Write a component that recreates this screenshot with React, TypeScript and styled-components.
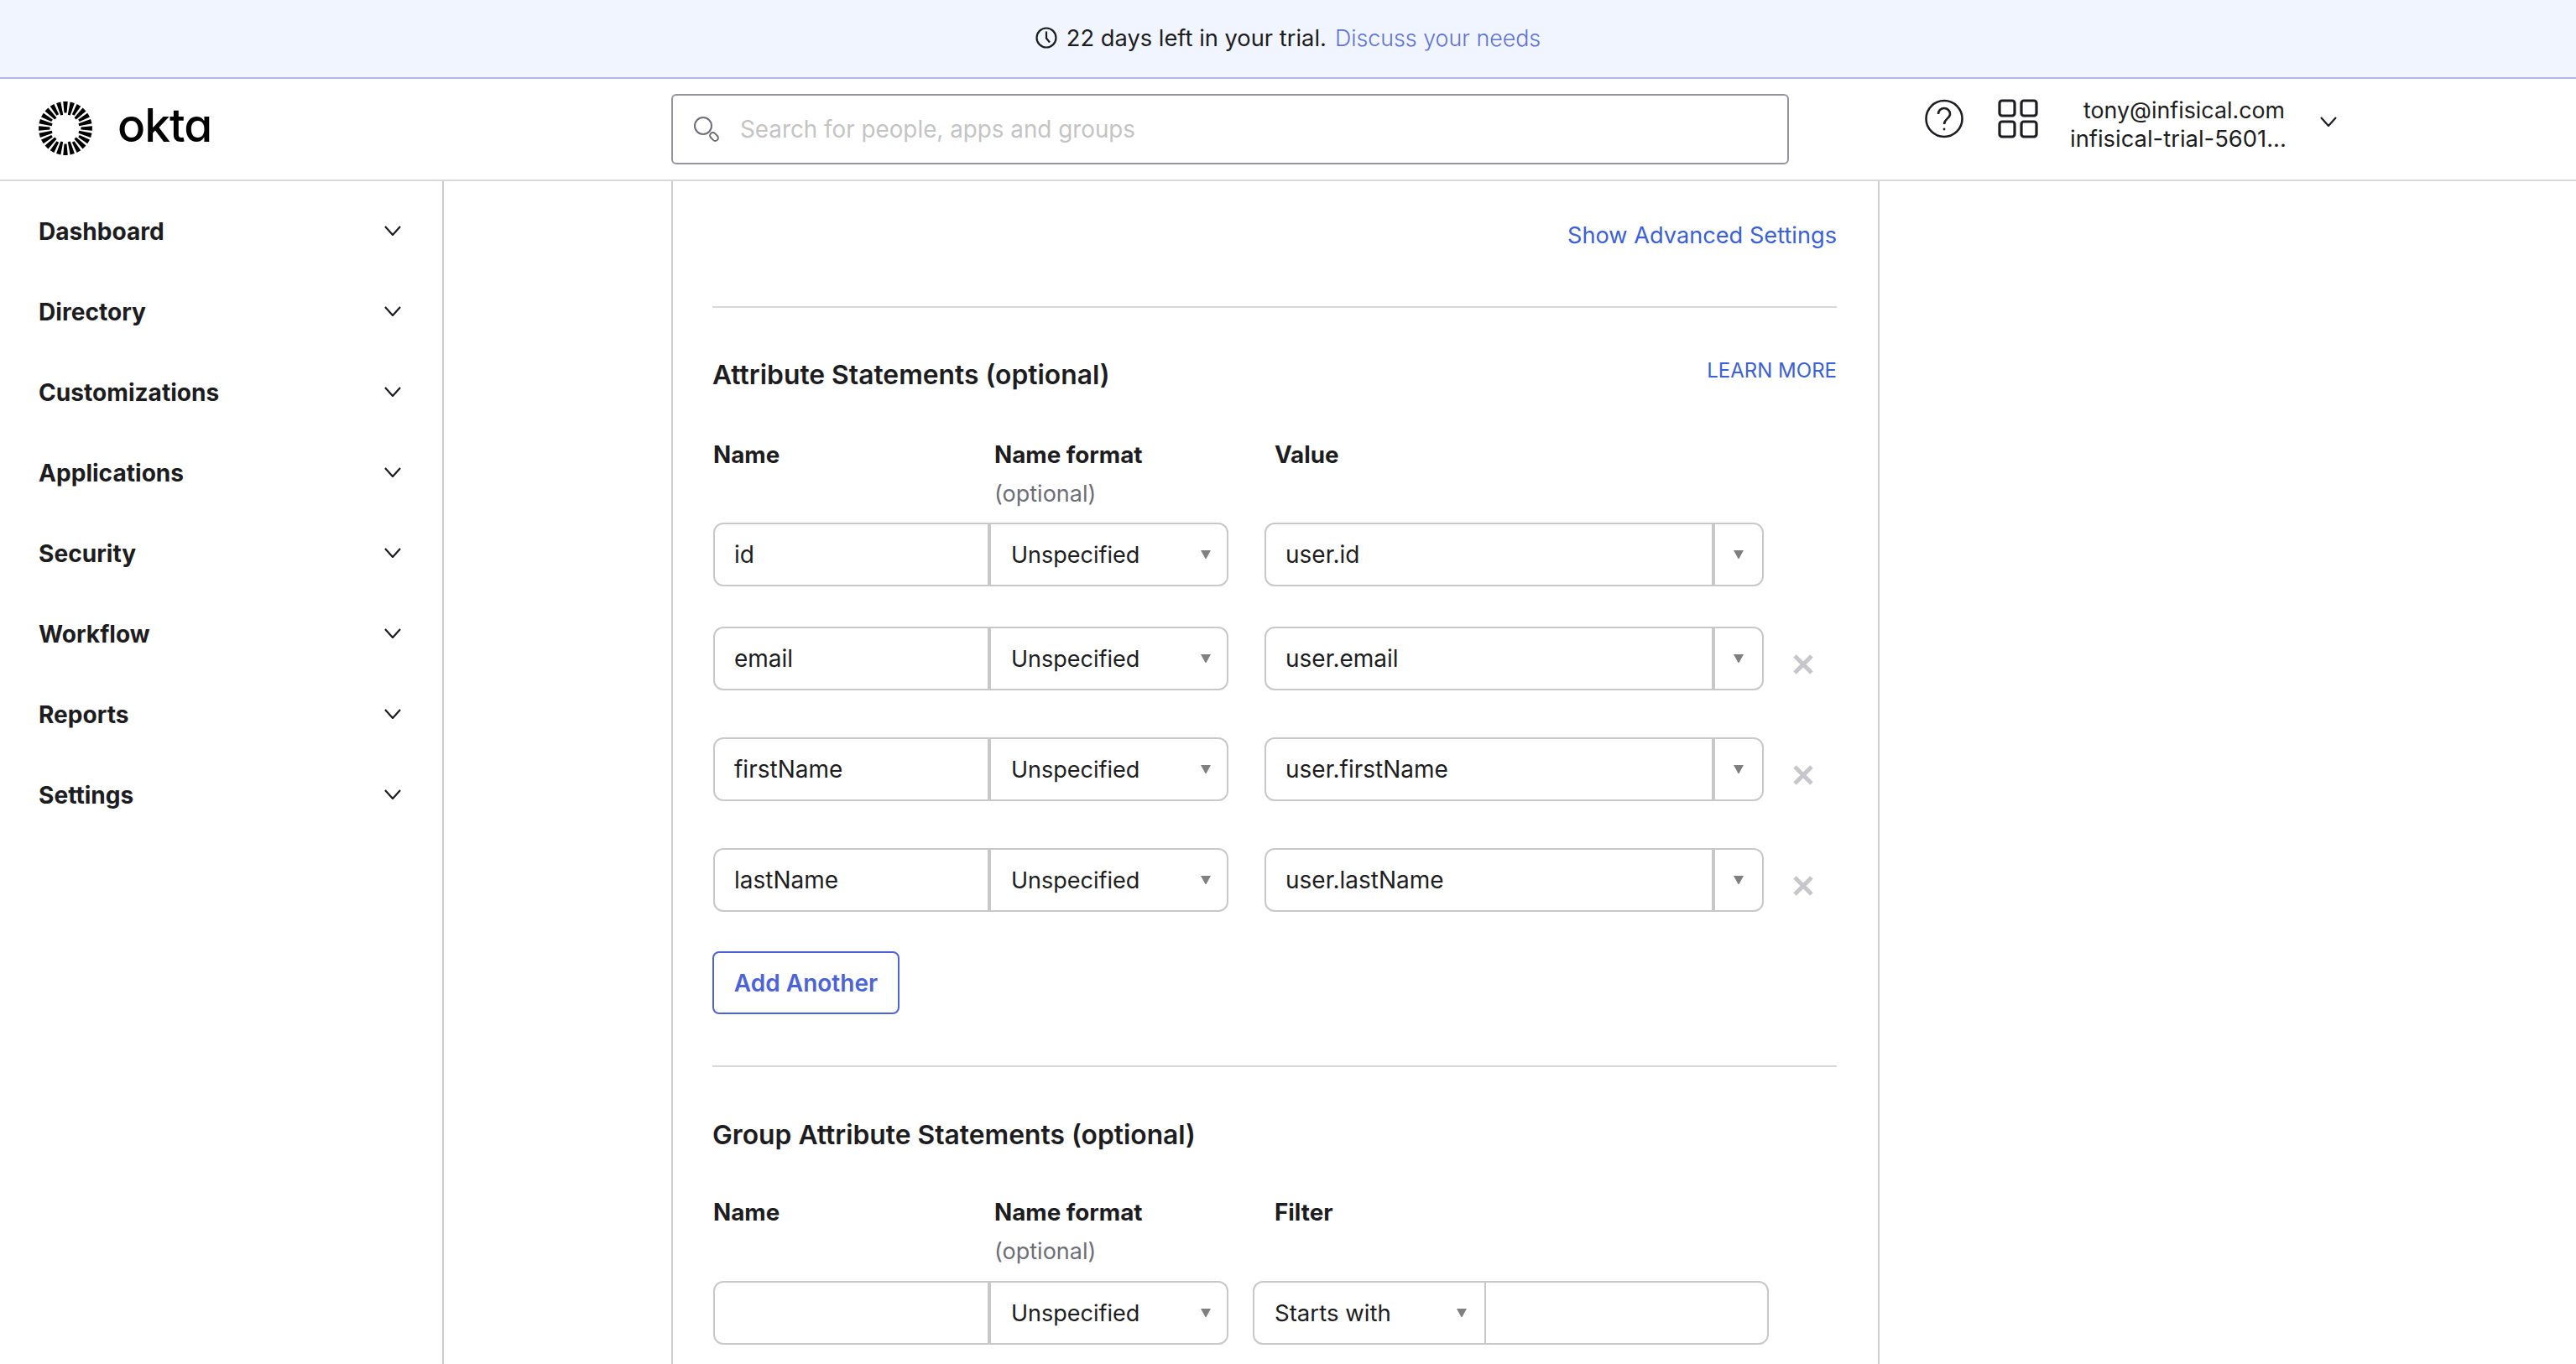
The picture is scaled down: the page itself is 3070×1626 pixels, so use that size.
import React, {FunctionComponent} from "react";
import styled, {createGlobalStyle} from "styled-components";

const NAV_ITEMS = ["Dashboard", "Directory", "Customizations", "Applications", "Security", "Workflow", "Reports", "Settings"];

const ATTRIBUTES = [
    {name: "id", value: "user.id", removable: false, gap: 0},
    {name: "email", value: "user.email", removable: true, gap: 48},
    {name: "firstName", value: "user.firstName", removable: true, gap: 56},
    {name: "lastName", value: "user.lastName", removable: true, gap: 56},
];

const RAYS = Array.from({length: 24}, (_, i) => {
    const angle = (i / 24) * Math.PI * 2;
    const inner = i % 2 === 0 ? 18.5 : 16.5;
    const point = (r: number, a: number) => `${(32 + r * Math.sin(a)).toFixed(2)},${(32 - r * Math.cos(a)).toFixed(2)}`;
    return [point(inner, angle - 1.5 / inner), point(32, angle - 0.085), point(32, angle + 0.085), point(inner, angle + 1.5 / inner)].join(" ");
});

const Chevron: FunctionComponent = () => (
    <svg width="20" height="12" viewBox="0 0 20 12" fill="none" stroke="#1d1d21" strokeWidth="2.2">
        <path d="M1 1l9 10 9-10" />
    </svg>
);

const Arrow: FunctionComponent = () => (
    <svg width="12" height="10" viewBox="0 0 12 10" fill="#808080">
        <path d="M0 0h12L6.5 10h-1z" />
    </svg>
);

const Logo: FunctionComponent = () => (
    <svg width="64" height="64" viewBox="0 0 64 64" fill="#000">
        {RAYS.map((points, i) => <polygon key={i} points={points} />)}
    </svg>
);

const AttributeRow: FunctionComponent<{name: string; value: string; removable: boolean; gap: number}> = ({name, value, removable, gap}) => (
    <Row $gap={gap}>
        <NameGroup>
            <NameField>{name}</NameField>
            <SelectField>Unspecified<Arrow /></SelectField>
        </NameGroup>
        <ValueGroup>
            <ValueField>{value}</ValueField>
            <ValueToggle><Arrow /></ValueToggle>
        </ValueGroup>
        {removable && (
            <Remove width="24" height="24" viewBox="0 0 24 24" stroke="#c6c6cc" strokeWidth="5" fill="none">
                <path d="M2 2l20 20M22 2L2 22" />
            </Remove>
        )}
    </Row>
);

export default function App() {
    return (
        <Page>
            <GlobalStyle />
            <Banner>
                <svg width="26" height="26" viewBox="0 0 26 26" fill="none" stroke="#1d1d21" strokeWidth="2.2">
                    <circle cx="13" cy="13" r="11.5" />
                    <path d="M13 5.5V13.5l4 5" />
                </svg>
                <BannerText>22 days left in your trial.</BannerText>
                <BannerLink>Discuss your needs</BannerLink>
            </Banner>
            <Header>
                <Brand>
                    <Logo />
                    <Wordmark>okta</Wordmark>
                </Brand>
                <Search>
                    <svg width="32" height="32" viewBox="0 0 32 32" fill="none" stroke="#6e6e78" strokeWidth="2">
                        <circle cx="11" cy="11" r="10" />
                        <rect x="18.5" y="20.5" width="11" height="7" rx="3.5" transform="rotate(45 24 24)" />
                    </svg>
                    <Placeholder>Search for people, apps and groups</Placeholder>
                </Search>
                <Tools>
                    <ToolIcon width="46" height="47" viewBox="0 0 46 47" fill="none" stroke="#1d1d21" strokeWidth="2.6">
                        <circle cx="23" cy="23.5" r="21.5" />
                        <path d="M16 18c0-4 3-7 7-7s7 3 7 7c0 5-7 6-7 12" />
                        <circle cx="23" cy="36" r="1.4" fill="#1d1d21" stroke="none" />
                    </ToolIcon>
                    <ToolIcon width="48" height="47" viewBox="0 0 48 47" fill="none" stroke="#1d1d21" strokeWidth="3.2">
                        <rect x="2" y="2" width="18" height="18" rx="3" />
                        <rect x="28" y="2" width="18" height="18" rx="3" />
                        <rect x="2" y="27" width="18" height="18" rx="3" />
                        <rect x="28" y="27" width="18" height="18" rx="3" />
                    </ToolIcon>
                    <Account>
                        <AccountEmail>tony@infisical.com</AccountEmail>
                        <div>infisical-trial-5601...</div>
                    </Account>
                    <AccountChevron><Chevron /></AccountChevron>
                </Tools>
            </Header>
            <Body>
                <Sidebar>
                    {NAV_ITEMS.map(item => (
                        <NavItem key={item}>
                            {item}
                            <Chevron />
                        </NavItem>
                    ))}
                </Sidebar>
                <Panel>
                    <AdvancedLink>Show Advanced Settings</AdvancedLink>
                    <Divider $top={64} />
                    <SectionHeading $top={60}>
                        Attribute Statements (optional)
                        <LearnMore>LEARN MORE</LearnMore>
                    </SectionHeading>
                    <Labels $top={55}>
                        <Label>Name</Label>
                        <Label>Name format<Optional>(optional)</Optional></Label>
                        <Label>Value</Label>
                    </Labels>
                    <Rows $top={14}>
                        {ATTRIBUTES.map(attribute => <AttributeRow key={attribute.name} {...attribute} />)}
                    </Rows>
                    <AddButton>Add Another</AddButton>
                    <Divider $top={61} />
                    <SectionHeading $top={61}>Group Attribute Statements (optional)</SectionHeading>
                    <Labels $top={52}>
                        <Label>Name</Label>
                        <Label>Name format<Optional>(optional)</Optional></Label>
                        <Label>Filter</Label>
                    </Labels>
                    <Rows $top={15}>
                        <Row $gap={0}>
                            <NameGroup>
                                <NameField />
                                <SelectField>Unspecified<Arrow /></SelectField>
                            </NameGroup>
                            <FilterGroup>
                                <FilterSelect>Starts with<Arrow /></FilterSelect>
                            </FilterGroup>
                        </Row>
                    </Rows>
                </Panel>
            </Body>
        </Page>
    );
}

const GlobalStyle = createGlobalStyle`
  html, body {
    margin: 0;
    background: white;
  }
  * {
    box-sizing: border-box;
  }
`;

const Page = styled.div`
  width: 3070px;
  height: 1626px;
  overflow: hidden;
  display: flex;
  flex-direction: column;
  font-family: Inter, "Liberation Sans", sans-serif;
  font-size: 28px;
  color: #1d1d21;
`;

const Banner = styled.div`
  height: 94px;
  flex-shrink: 0;
  display: flex;
  align-items: center;
  justify-content: center;
  padding-bottom: 2px;
  background: #f1f5ff;
  border-bottom: 2px solid #b1b9ea;
  font-size: 27.3px;
`;

const BannerText = styled.span`
  margin: 0 10px 0 11px;
`;

const BannerLink = styled.span`
  font-size: 26.8px;
  font-weight: 300;
  color: #6073d8;
`;

const Header = styled.div`
  height: 122px;
  flex-shrink: 0;
  display: flex;
  border-bottom: 2px solid #d7d7dc;
`;

const Brand = styled.div`
  width: 800px;
  display: flex;
  align-items: center;
  gap: 30px;
  padding: 0 0 2px 46px;
`;

const Wordmark = styled.span`
  font-size: 55px;
  font-weight: 500;
  line-height: 1;
  color: #000;
  font-feature-settings: "cv11";
  letter-spacing: -1px;
  margin-top: -8px;
`;

const Search = styled.div`
  width: 1332px;
  height: 84px;
  margin-top: 18px;
  display: flex;
  align-items: center;
  gap: 23px;
  padding: 2px 0 0 25px;
  border: 2px solid #94949e;
  border-radius: 6px;
`;

const Placeholder = styled.span`
  margin-top: -2px;
  font-size: 27.8px;
  color: #c4c4c4;
`;

const Tools = styled.div`
  display: flex;
  align-items: flex-start;
  padding-left: 162px;
`;

const ToolIcon = styled.svg`
  margin: 24px 41px 0 0;
  &:nth-of-type(2) {
    margin-right: 38px;
  }
`;

const Account = styled.div`
  width: 256px;
  margin-top: 20px;
  font-size: 27.4px;
  text-align: right;
  line-height: 34px;
  white-space: nowrap;
`;

const AccountEmail = styled.div`
  font-size: 26.8px;
`;

const AccountChevron = styled.div`
  margin: 30px 0 0 42px;
`;

const Body = styled.div`
  flex: 1;
  display: flex;
  min-height: 0;
`;

const Sidebar = styled.nav`
  width: 529px;
  flex-shrink: 0;
  padding-top: 12px;
  border-right: 2px solid #cccccc;
`;

const NavItem = styled.div`
  height: 96px;
  display: flex;
  align-items: center;
  justify-content: space-between;
  padding: 0 49px 0 46px;
  font-size: 28.1px;
  font-weight: 700;
  svg {
    margin-top: -3px;
  }
`;

const Panel = styled.main`
  width: 1440px;
  margin-left: 271px;
  padding: 45px 49px 0 47px;
  border-left: 2px solid #cccccc;
  border-right: 2px solid #cccccc;
`;

const AdvancedLink = styled.div`
  height: 40px;
  line-height: 40px;
  font-size: 27.2px;
  text-align: right;
  color: #3a5fd9;
`;

const Divider = styled.div<{$top: number}>`
  height: 2px;
  margin-top: ${props => props.$top}px;
  background: #d7d7dc;
`;

const SectionHeading = styled.div<{$top: number}>`
  height: 40px;
  margin-top: ${props => props.$top}px;
  display: flex;
  justify-content: space-between;
  line-height: 40px;
  font-size: 31.8px;
  font-weight: 600;
`;

const LearnMore = styled.span`
  margin-top: -5px;
  font-size: 24px;
  font-weight: 400;
  color: #3a5fd9;
`;

const Labels = styled.div<{$top: number}>`
  margin-top: ${props => props.$top}px;
  display: grid;
  grid-template-columns: 335px 334px 1fr;
  padding-left: 1px;
`;

const Label = styled.div`
  line-height: 40px;
  font-size: 27.8px;
  font-weight: 700;
`;

const Optional = styled.div`
  margin-top: 7px;
  font-size: 27px;
  font-weight: 400;
  color: #6e6e78;
`;

const Rows = styled.div<{$top: number}>`
  margin-top: ${props => props.$top}px;
`;

const Row = styled.div<{$gap: number}>`
  display: flex;
  margin-top: ${props => props.$gap}px;
`;

const NameGroup = styled.div`
  width: 614px;
  height: 76px;
  margin-left: 1px;
  display: flex;
  border: 2px solid #c8c8c8;
  border-radius: 12px;
`;

const NameField = styled.div`
  width: 329px;
  display: flex;
  align-items: center;
  padding-left: 23px;
  border-right: 4px solid #c8c8c8;
`;

const SelectField = styled.div`
  flex: 1;
  display: flex;
  align-items: center;
  justify-content: space-between;
  padding: 0 19px 0 24px;
  font-size: 27px;
`;

const ValueGroup = styled.div`
  width: 595px;
  height: 76px;
  margin-left: 43px;
  display: flex;
  border: 2px solid #c8c8c8;
  border-radius: 12px;
`;

const ValueField = styled.div`
  flex: 1;
  display: flex;
  align-items: center;
  padding-left: 23px;
  border-right: 4px solid #c8c8c8;
`;

const ValueToggle = styled.div`
  width: 56px;
  display: flex;
  align-items: center;
  justify-content: center;
`;

const Remove = styled.svg`
  margin: 33px 0 0 35px;
`;

const FilterGroup = styled.div`
  width: 615px;
  height: 76px;
  margin-left: 29px;
  display: flex;
  border: 2px solid #c8c8c8;
  border-radius: 12px;
`;

const FilterSelect = styled.div`
  width: 276px;
  display: flex;
  align-items: center;
  justify-content: space-between;
  padding: 0 21px 0 24px;
  font-size: 27.6px;
  border-right: 2px solid #c8c8c8;
`;

const AddButton = styled.div`
  width: 223px;
  height: 75px;
  margin-top: 47px;
  display: flex;
  align-items: center;
  justify-content: center;
  font-weight: 600;
  color: #4b62d9;
  border: 2px solid #4b62d9;
  border-radius: 8px;
`;
